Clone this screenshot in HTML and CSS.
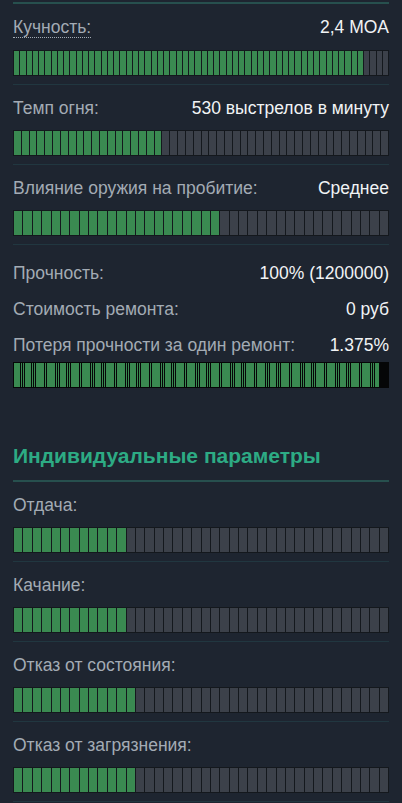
FILE: index.html
```html
<!DOCTYPE html>
<html lang="ru">
<head>
    <meta charset="UTF-8">
    <meta name="viewport" content="width=device-width, initial-scale=1.0">
    <title>Характеристики оружия</title>
    <link rel="stylesheet" href="styles.css">
</head>
<body>

    <div class="stats">
        <div class="section-rule"></div>

        <div class="stat">
            <div class="stat-head">
                <span class="stat-label hint">Кучность:</span>
                <span class="stat-value">2,4 MOA</span>
            </div>
            <div class="bar" data-total="60" data-filled="56"></div>
        </div>

        <div class="stat">
            <div class="stat-head">
                <span class="stat-label">Темп огня:</span>
                <span class="stat-value">530 выстрелов в минуту</span>
            </div>
            <div class="bar" data-total="48" data-filled="19"></div>
        </div>

        <div class="stat">
            <div class="stat-head">
                <span class="stat-label">Влияние оружия на пробитие:</span>
                <span class="stat-value">Среднее</span>
            </div>
            <div class="bar" data-total="40" data-filled="22"></div>
        </div>

        <div class="durability">
            <div class="stat-head">
                <span class="stat-label">Прочность:</span>
                <span class="stat-value">100% (1200000)</span>
            </div>
            <div class="stat-head">
                <span class="stat-label">Стоимость ремонта:</span>
                <span class="stat-value">0 руб</span>
            </div>
            <div class="stat-head">
                <span class="stat-label">Потеря прочности за один ремонт:</span>
                <span class="stat-value">1.375%</span>
            </div>
            <div class="bar bar-fine" data-total="171" data-filled="167"></div>
        </div>

        <h3 class="section-title">Индивидуальные параметры</h3>

        <div class="stat">
            <div class="stat-head">
                <span class="stat-label">Отдача:</span>
            </div>
            <div class="bar" data-total="40" data-filled="12"></div>
        </div>

        <div class="stat">
            <div class="stat-head">
                <span class="stat-label">Качание:</span>
            </div>
            <div class="bar" data-total="40" data-filled="12"></div>
        </div>

        <div class="stat">
            <div class="stat-head">
                <span class="stat-label">Отказ от состояния:</span>
            </div>
            <div class="bar" data-total="40" data-filled="13"></div>
        </div>

        <div class="stat">
            <div class="stat-head">
                <span class="stat-label">Отказ от загрязнения:</span>
            </div>
            <div class="bar" data-total="40" data-filled="13"></div>
        </div>
    </div>

    <script>
        // Fill every bar with its segments
        document.querySelectorAll('.bar').forEach(function(bar) {
            const total = parseInt(bar.dataset.total, 10);
            const filled = parseInt(bar.dataset.filled, 10);

            for (let i = 0; i < total; i++) {
                const seg = document.createElement('span');
                seg.className = i < filled ? 'seg on' : 'seg';
                bar.appendChild(seg);
            }
        });
    </script>

</body>
</html>
```

FILE: styles.css
```css
/* Basic reset */
* {
    margin: 0;
    padding: 0;
    box-sizing: border-box;
}

body {
    font-family: 'Liberation Sans', Arial, sans-serif;
    font-size: 17.5px;
    line-height: 20px;
    background-color: #1e2530;
    color: #a3abb4;
}

.stats {
    padding: 2px 13px 0;
}

.section-rule {
    height: 2px;
    background-color: #27504e;
}

.stat {
    padding: 13px 0 8px;
    border-bottom: 1px solid #213740;
}

.stat-head {
    display: flex;
    justify-content: space-between;
    align-items: baseline;
}

.stat-label {
    color: #a3abb4;
}

.stat-label.hint {
    border-bottom: 1px dotted #a3abb4;
}

.stat-value {
    color: #f1f3f5;
}

/* Segmented bar */
.bar {
    display: flex;
    gap: 1px;
    height: 26px;
    margin-top: 12px;
    padding: 1px;
    background-color: #14181d;
}

.bar .seg {
    flex: 1;
    background-color: #3c414a;
}

.bar .seg.on {
    background-color: #3a8a51;
}

.bar-fine {
    gap: 0.5px;
    background-color: #050607;
    margin-top: 7px;
}

.bar-fine .seg {
    background-color: transparent;
}

/* Durability block */
.durability {
    padding-top: 18px;
}

.durability .stat-head + .stat-head {
    margin-top: 16px;
}

.section-title {
    margin-top: 56px;
    padding-bottom: 12px;
    border-bottom: 2px solid #27504e;
    font-size: 21px;
    line-height: 24px;
    font-weight: bold;
    color: #2dab84;
}
```
